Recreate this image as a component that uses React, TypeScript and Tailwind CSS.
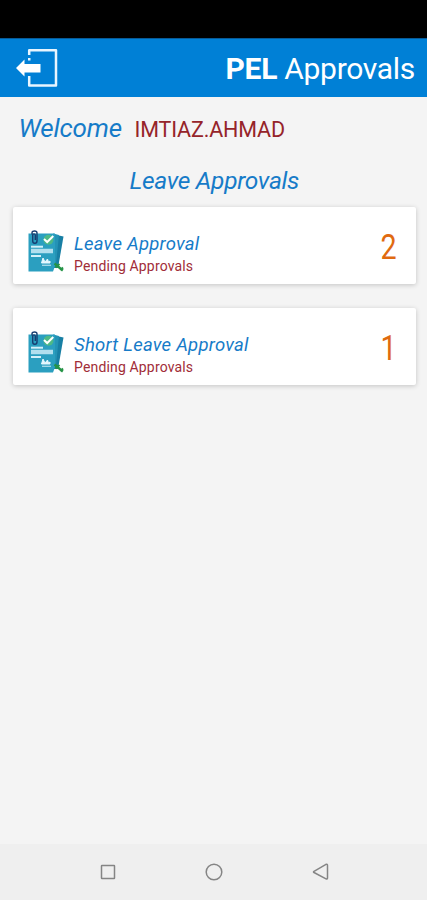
import React from "react";

function ExitIcon() {
  return (
    <svg width="42" height="40" viewBox="0 0 42 40" fill="none">
      <path d="M13.2 7V2.2H40V37.4H13.2V28" stroke="#e8f5ff" strokeWidth="2.5" strokeLinejoin="round" />
      <rect x="12" y="10" width="2.5" height="2.5" fill="#e8f5ff" />
      <path d="M0 20L8.5 11.5V16H24.5V24.5H8.5V28.5Z" fill="#fff" />
    </svg>
  );
}

function DocumentIcon() {
  return (
    <svg width="37" height="43" viewBox="0 0 37 43" fill="none">
      <path d="M24 4L35.5 6.5L30 38L20 38Z" fill="#187fa4" />
      <path d="M25 3.5L31 5L28 34L24 38Z" fill="#2493b5" />
      <path d="M.5 3.5H27V36L25 41.5H.5Z" fill="#2b9fc0" />
      <path d="M4 4.5V2.8C4 .3 9 .3 9 2.8V11C9 14 4.7 14 4.7 11V5.2C4.7 3.4 7.3 3.4 7.3 5.2V10" stroke="#173d70" strokeWidth="1.4" />
      <circle cx="20.5" cy="9.7" r="5" fill="#4db986" />
      <path d="M16 9L19.2 12L25.3 6" stroke="#fff" strokeWidth="2" />
      <path d="M3 16.7H15" stroke="#d4f1fa" strokeWidth="2" />
      <path d="M3 21H25" stroke="#b1dfee" strokeWidth="4.5" />
      <path d="M3 26H13" stroke="#d4f1fa" strokeWidth="2" />
      <path d="M13.5 33L15 28L17 32L19.5 29L20.5 32L22 31V33Z" fill="#e5f8ff" stroke="#e5f8ff" />
      <path d="M14 35.3H23" stroke="#a8dcea" strokeWidth="1.3" />
      <path d="M26.5 33.5L34.8 40.5" stroke="#269447" strokeWidth="2.3" />
      <path d="M27.5 37.5L31.5 34M32.5 40L35 37.5" stroke="#269447" strokeWidth="2" />
    </svg>
  );
}

function ApprovalCard({ title, count }: { title: string; count: number }) {
  return (
    <section className="flex h-[77px] items-start rounded-[2px] bg-white pl-[15.5px] pr-[19px] pt-[23px] shadow-[0_1px_5px_rgba(0,0,0,0.2)]">
      <DocumentIcon />
      <div className="ml-[9px] whitespace-nowrap pt-[3px]">
        <h3 className="h-[23px] text-[18.5px] italic leading-[23px] tracking-[0.25px] text-[#167bc8]">{title}</h3>
        <p className="h-[20px] text-[14px] leading-[21px] tracking-[0.16px] text-[#a12d38]">Pending Approvals</p>
      </div>
      <span className="-mt-px ml-auto origin-right scale-x-[0.82] text-[35px] leading-[37px] text-[#e06a10]">{count}</span>
    </section>
  );
}

export default function App() {
  return (
    <div className="flex h-[900px] w-full flex-col bg-[#f4f4f4] font-['Roboto',sans-serif]">
      <div className="h-[38px] shrink-0 bg-black" />
      <header className="flex h-[59px] shrink-0 items-center justify-between border-t border-[#075b99] bg-[#0080d6] pl-4 pr-3">
        <ExitIcon />
        <h1 className="whitespace-nowrap pt-[2px] text-[30px] leading-[36px] tracking-[-0.3px] text-white"><b>PEL</b> Approvals</h1>
      </header>
      <main className="flex-1 pl-[12.5px] pr-[11px]">
        <div className="flex h-[63px] items-baseline whitespace-nowrap pl-[6px] pt-[15px]">
          <span className="text-[26px] italic leading-[32px] tracking-[-0.15px] text-[#167bc8]">Welcome</span>
          <span className="ml-[12.5px] text-[21.5px] leading-[32px] tracking-[-0.15px] text-[#96242a]">IMTIAZ.AHMAD</span>
        </div>
        <h2 className="h-[47px] pt-[6px] text-center text-[24.5px] italic leading-[30px] tracking-[-0.28px] text-[#167bc8]">Leave Approvals</h2>
        <div className="flex flex-col gap-6">
          <ApprovalCard title="Leave Approval" count={2} />
          <ApprovalCard title="Short Leave Approval" count={1} />
        </div>
      </main>
      <nav className="grid h-14 shrink-0 grid-cols-[107px_106px_107px] place-items-center justify-center bg-[#efefef] text-[#858585]">
        <svg className="ml-px" width="16" height="16" fill="none" stroke="currentColor" strokeWidth="1.5"><rect x="1.5" y="1.5" width="13" height="13" rx=".5" /></svg>
        <svg width="18" height="18" fill="none" stroke="currentColor" strokeWidth="1.5"><circle cx="9" cy="9" r="7.8" /></svg>
        <svg className="ml-[2px]" width="18" height="18" fill="none" stroke="currentColor" strokeWidth="1.5" strokeLinejoin="round"><path d="M2 8.3L14 1.3Q15.5 1 15.5 2.5V15Q15.5 16.3 14 15.8L2 9.5Q1 9 2 8.3Z" /></svg>
      </nav>
    </div>
  );
}
